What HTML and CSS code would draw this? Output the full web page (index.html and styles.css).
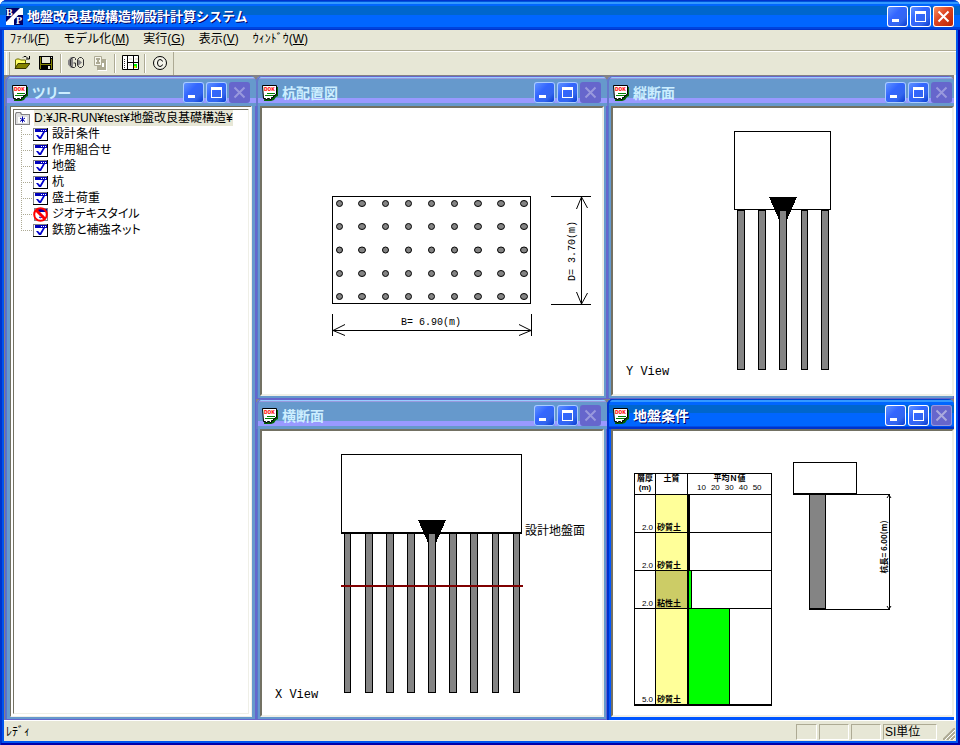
FILE: index.html
```html
<!DOCTYPE html>
<html lang="ja">
<head>
<meta charset="utf-8">
<title>地盤改良基礎構造物設計計算システム</title>
<link rel="stylesheet" href="styles.css">
</head>
<body>
<svg class="defs" aria-hidden="true">
  <defs>
    <symbol id="doc" viewBox="0 0 16 16">
      <path d="M3 2h13v9l-2 1-2 3-3 1H2z" fill="#006600"/>
      <path d="M.5.5h14v9h-1v1h-2v2h-2v2h-2v-1h-2v1h-2v-1h-2z" fill="#fff" stroke="#000"/>
      <text x="2" y="6" class="doc-text">DOK</text>
      <path d="M5 8.500h8M3 10.500h8" stroke="#008000"/>
    </symbol>
    <symbol id="min" viewBox="0 0 21 21"><path d="M5 13h7v3H5z" fill="#fff"/></symbol>
    <symbol id="max" viewBox="0 0 21 21"><path d="M5 5h11v11H5zM6 8v7h9V8z" fill="#fff" fill-rule="evenodd"/></symbol>
    <symbol id="close" viewBox="0 0 21 21"><path d="M5.500 5.500l10 10M15.500 5.500l-10 10" fill="none" stroke="currentColor" stroke-width="2"/></symbol>
    <symbol id="item" viewBox="0 0 15 13">
      <path d="M0 0h15v13H0z" fill="#000"/><path d="M0 0h14v12H0z" fill="#848284"/><path d="M1 1h13v11H1z" fill="#fff"/>
      <path d="M2 1h12v3H2z" fill="#0000bb"/><path d="M8 2h1v1H8zM10 2h1v1h-1zM12 2h1v1h-1z" fill="#fff"/>
      <path d="M3 7h2l2 2 3-5h2L8 11H6z" fill="#0000cc"/>
    </symbol>
    <symbol id="ban" viewBox="0 0 15 15">
      <path d="M1 1h14v13H1z" fill="#848284"/><path d="M2 2h12v11H2z" fill="#fff"/><path d="M3 2h11v3H3z" fill="#0000aa"/>
      <path d="M6 10l2 1 2-3" fill="none" stroke="#0000cc"/>
      <circle cx="7.500" cy="7.500" r="6.300" fill="none" stroke="#f00" stroke-width="2"/><path d="M3 3l9 9" stroke="#f00" stroke-width="3"/>
    </symbol>
  </defs>
</svg>

<div class="window">
  <header class="titlebar">
    <svg class="app-icon" viewBox="0 0 17 17" aria-hidden="true">
      <path d="M0 0h17v17H0z" fill="#000066"/><path d="M0 17v-3L14 0h3v2L3 17z" fill="#fff"/><path d="M8 8l8-8h1v7h-7z" fill="#fff"/>
      <path d="M0 17l8-8v8z" fill="#fff"/>
      <text x="0" y="8" class="app-letter">B</text><text x="10" y="16" class="app-letter">P</text>
    </svg>
    <h1>地盤改良基礎構造物設計計算システム</h1>
    <div class="controls">
      <button class="ctl" aria-label="最小化"><svg><use href="#min"/></svg></button>
      <button class="ctl" aria-label="最大化"><svg><use href="#max"/></svg></button>
      <button class="ctl ctl-red" aria-label="閉じる"><svg><use href="#close"/></svg></button>
    </div>
  </header>

  <nav class="menubar">
    <button>ﾌｧｲﾙ(<u>F</u>)</button>
    <button>モデル化(<u>M</u>)</button>
    <button>実行(<u>G</u>)</button>
    <button>表示(<u>V</u>)</button>
    <button>ｳｨﾝﾄﾞｳ(<u>W</u>)</button>
  </nav>

  <div class="toolbar">
    <button aria-label="開く"><svg class="tool" viewBox="0 0 16 16">
      <path d="M1.500 13V5l1-1h3l1 1h5v4" fill="#ffff66" stroke="#666600"/><path d="M1 13.500l3-5h12l-4 5z" fill="#848200" stroke="#333300"/>
      <path d="M9 2.500l1-1h2l2 2M15.500 1v3H12" fill="none" stroke="#000"/></svg></button>
    <button aria-label="保存"><svg class="tool" viewBox="0 0 16 16">
      <path d="M1 1h14v14H2l-1-1z" fill="#000"/><path d="M2 2h1v12H2zM13 4h1v10h-1zM3 9h10v1H3z" fill="#848200"/>
      <path d="M4 2h8v6H4zM13 2h1v1h-1z" fill="#e7e7d6"/><path d="M10 11h2v3h-2z" fill="#e7e7d6"/></svg></button>
    <span class="sep"></span>
    <button aria-label="計算実行"><svg class="tool-wide" viewBox="0 0 17 15">
      <path d="M3 2h2v11H3L0 9.500v-4zM10 4l4 3.500-4 3.500z" fill="#848284"/>
      <path d="M7.500 5V3.500l-1-1h-2l-2 2v6l2 2h2l1-1V8H5.500M9.500 4.500l2-2h2l2 2v6l-2 2h-2l-2-2z" fill="none" stroke="#333"/></svg></button>
    <button aria-label="コピー" disabled><svg class="tool" viewBox="0 0 16 16">
      <path d="M6 5h9v11H6z" fill="#fff"/><path d="M5 4h9v11H5z" fill="#adaa94"/><path d="M2.500 1.500h7v9h-7z" fill="#f7f7ee" stroke="#adaa94"/>
      <path d="M4 3h4v2H7v2h1v2H4V7h1V5H4z" fill="#adaa94"/><path d="M10 8h2v4h-2z" fill="#fff"/></svg></button>
    <span class="sep"></span>
    <button aria-label="一覧"><svg class="tool-wide" viewBox="0 0 17 15">
      <path d="M.5.5h16v14H.5z" fill="#fff" stroke="#000"/><path d="M5.500 0v15M11.500 0v15M5 7.500h12" stroke="#000"/>
      <path d="M2 4.500h2M2 6.500h2M2 8.500h2M2 10.500h2M2 12.500h2" stroke="#333" stroke-dasharray="1"/><path d="M7 4h3M13 4h3M7 10h3" stroke="#d6d3bd"/><path d="M12 9h3v4h-3z" fill="#0f0"/><path d="M12 11h2v2h-2z" fill="#fc0"/></svg></button>
    <span class="sep"></span>
    <button aria-label="バージョン情報"><svg class="tool" viewBox="0 0 16 16">
      <circle cx="8" cy="8" r="6.500" fill="#f4f4ea" stroke="#000"/><path d="M10.500 6.500Q10 4.500 8 4.500Q5.500 4.500 5.500 8T8 11.500Q10 11.500 10.500 9.500" fill="none" stroke="#000"/></svg></button>
    <span class="tool-end"></span>
  </div>

  <main class="mdi">
    <section class="child child-tree">
      <header class="child-title"><svg class="doc"><use href="#doc"/></svg><h2>ツリー</h2>
        <div class="controls">
          <button class="ctl" aria-label="最小化"><svg><use href="#min"/></svg></button>
          <button class="ctl" aria-label="最大化"><svg><use href="#max"/></svg></button>
          <button class="ctl ctl-off" aria-label="閉じる" disabled><svg><use href="#close"/></svg></button>
        </div></header>
      <div class="client client-tree">
        <div class="tree-root">
          <svg class="root-icon" viewBox="0 0 15 13" aria-hidden="true"><path d="M0 2l1-2h5l1 2h8v11H0z" fill="#848284"/><path d="M1 2l1-1h3l1 2h8v9H1z" fill="#dedede"/><path d="M3 5h9v6H3z" fill="#fff"/><path d="M7.500 4.500v6M5 6l5 3.500M10 6L5 9.500" stroke="#0000aa"/></svg>
          <span class="root-label">D:¥JR-RUN¥test¥地盤改良基礎構造¥</span>
        </div>
        <ul class="tree">
          <li><svg class="item"><use href="#item"/></svg>設計条件</li>
          <li><svg class="item"><use href="#item"/></svg>作用組合せ</li>
          <li><svg class="item"><use href="#item"/></svg>地盤</li>
          <li><svg class="item"><use href="#item"/></svg>杭</li>
          <li><svg class="item"><use href="#item"/></svg>盛土荷重</li>
          <li><svg class="item item-ban"><use href="#ban"/></svg>ジオテキスタイル</li>
          <li><svg class="item"><use href="#item"/></svg>鉄筋と補強ネット</li>
        </ul>
      </div>
    </section>

    <section class="child">
      <header class="child-title"><svg class="doc"><use href="#doc"/></svg><h2>杭配置図</h2>
        <div class="controls">
          <button class="ctl" aria-label="最小化"><svg><use href="#min"/></svg></button>
          <button class="ctl" aria-label="最大化"><svg><use href="#max"/></svg></button>
          <button class="ctl ctl-off" aria-label="閉じる" disabled><svg><use href="#close"/></svg></button>
        </div></header>
      <div class="client">
        <svg class="drawing">
          <defs>
            <g id="pile-row" fill="#848484" stroke="#000" shape-rendering="auto">
              <circle cx="77.500" r="3"/><ellipse cx="100" rx="3.500" ry="3"/><circle cx="123.500" r="3"/>
              <circle cx="146.500" r="3"/><circle cx="169.500" r="3"/><circle cx="192.500" r="3"/>
              <ellipse cx="216" rx="3.500" ry="3"/><ellipse cx="239" rx="3.500" ry="3"/><ellipse cx="262" rx="3.500" ry="3"/>
            </g>
          </defs>
          <rect class="line" x="70.500" y="88.500" width="198" height="107"/>
          <use href="#pile-row" y="95.500"/><use href="#pile-row" y="118.500"/><use href="#pile-row" y="142"/><use href="#pile-row" y="165.500"/><use href="#pile-row" y="188.500"/>
          <path class="line" d="M70.500 206v22M269.500 206v22M70 222.500h200"/>
          <path class="line thin" d="M83 216.500l-12 6 12 5M257 216.500l12 6-12 5"/>
          <path class="line" d="M289 88.500h40M289 196.500h40M319.500 88v109"/>
          <path class="line thin" d="M314.500 101l5-12 6 11M314.500 184l5 12 6-11"/>
          <text class="dim" x="169" y="217" text-anchor="middle">B= 6.90(m)</text>
          <text class="dim" transform="translate(313 143) rotate(-90)" text-anchor="middle">D= 3.70(m)</text>
        </svg>
      </div>
    </section>

    <section class="child child-edge">
      <header class="child-title"><svg class="doc"><use href="#doc"/></svg><h2>縦断面</h2>
        <div class="controls">
          <button class="ctl" aria-label="最小化"><svg><use href="#min"/></svg></button>
          <button class="ctl" aria-label="最大化"><svg><use href="#max"/></svg></button>
          <button class="ctl ctl-off" aria-label="閉じる" disabled><svg><use href="#close"/></svg></button>
        </div></header>
      <div class="client">
        <svg class="drawing">
          <rect class="line" x="121.500" y="23.500" width="96" height="78"/>
          <path d="M156 89h28l-14 32z"/>
          <g class="pile">
            <rect x="124.500" y="102.500" width="7" height="159"/><rect x="145.500" y="102.500" width="7" height="159"/>
            <rect x="166.500" y="102.500" width="7" height="159"/><rect x="188.500" y="102.500" width="6" height="159"/>
            <rect x="208.500" y="102.500" width="7" height="159"/>
          </g>
          <text class="view-name" x="13" y="267">Y View</text>
        </svg>
      </div>
    </section>

    <section class="child">
      <header class="child-title"><svg class="doc"><use href="#doc"/></svg><h2>横断面</h2>
        <div class="controls">
          <button class="ctl" aria-label="最小化"><svg><use href="#min"/></svg></button>
          <button class="ctl" aria-label="最大化"><svg><use href="#max"/></svg></button>
          <button class="ctl ctl-off" aria-label="閉じる" disabled><svg><use href="#close"/></svg></button>
        </div></header>
      <div class="client">
        <svg class="drawing">
          <rect class="line" x="79.500" y="23.500" width="180" height="79"/>
          <path d="M79 101h181v2H79zM156 89h28l-14 32z"/>
          <g class="pile">
            <rect x="82.500" y="102.500" width="6" height="159"/><rect x="103.500" y="102.500" width="7" height="159"/>
            <rect x="124.500" y="102.500" width="7" height="159"/><rect x="145.500" y="102.500" width="7" height="159"/>
            <rect x="166.500" y="102.500" width="7" height="159"/><rect x="187.500" y="102.500" width="7" height="159"/>
            <rect x="208.500" y="102.500" width="7" height="159"/><rect x="230.500" y="102.500" width="6" height="159"/>
            <rect x="251.500" y="102.500" width="6" height="159"/>
          </g>
          <path d="M79 154h182v2H79z" fill="#800000"/>
          <text class="ground" x="263" y="104">設計地盤面</text>
          <text class="view-name" x="13" y="267">X View</text>
        </svg>
      </div>
    </section>

    <section class="child child-edge child-active">
      <header class="child-title"><svg class="doc"><use href="#doc"/></svg><h2>地盤条件</h2>
        <div class="controls">
          <button class="ctl" aria-label="最小化"><svg><use href="#min"/></svg></button>
          <button class="ctl" aria-label="最大化"><svg><use href="#max"/></svg></button>
          <button class="ctl ctl-off" aria-label="閉じる" disabled><svg><use href="#close"/></svg></button>
        </div></header>
      <div class="client client-soil">
        <table class="soil">
          <thead><tr><th class="c-depth">層厚<br>(m)</th><th class="c-kind">土質</th>
            <th class="c-n">平均Ｎ値<div class="scale"><span>10</span><span>20</span><span>30</span><span>40</span><span>50</span></div></th></tr></thead>
          <tbody>
            <tr class="layer"><td>2.0</td><td class="sand">砂質土</td><td class="n"><div class="bar" style="width:1%"></div></td></tr>
            <tr class="layer"><td>2.0</td><td class="sand">砂質土</td><td class="n"><div class="bar" style="width:1%"></div></td></tr>
            <tr class="layer"><td>2.0</td><td class="clay">粘性土</td><td class="n"><div class="bar" style="width:4%"></div></td></tr>
            <tr class="layer layer-deep"><td>5.0</td><td class="sand">砂質土</td><td class="n"><div class="bar" style="width:50%"></div></td></tr>
          </tbody>
        </table>
        <svg class="drawing">
          <rect class="line" x="13.500" y="31.500" width="63" height="31"/>
          <rect class="pile" x="29.500" y="63.500" width="16" height="115"/>
          <path class="line" d="M13 62.500h64M13 63.500h97M29 177.500h17M29 178.500h81M109.500 63v116"/>
          <path class="line thin" d="M107 67l2-3 2 3M107 175l2 3 2-3"/>
          <text class="length" transform="translate(107 116) rotate(-90)" text-anchor="middle">杭長= 6.00(m)</text>
        </svg>
      </div>
    </section>
  </main>

  <footer class="status">
    <span class="message">ﾚﾃﾞｨ</span>
    <span class="cell"></span><span class="cell cell-mid"></span><span class="cell cell-mid"></span><span class="cell cell-unit">SI単位</span>
    <svg class="grip" viewBox="0 0 12 12" aria-hidden="true"><path d="M0 12L12 0M4 12l8-8M8 12l4-4" stroke="#adaa94" stroke-width="2"/><path d="M2 12L12 2M6 12l6-6M10 12l2-2" stroke="#fff"/></svg>
  </footer>
</div>
</body>
</html>
```
FILE: styles.css
```css
* { box-sizing: border-box; }

body {
  margin: 0;
  background: #fff;
  color: #000;
  font: 12px/16px "Liberation Sans", "Noto Sans CJK JP", sans-serif;
}

button {
  margin: 0;
  padding: 0;
  border: 0;
  background: none;
  color: inherit;
  font: inherit;
}

h1, h2 {
  flex: 1;
  margin: 0;
  overflow: hidden;
  line-height: 20px;
  white-space: nowrap;
}

h1 { font-size: 13px; }
h2 { font-size: 14px; font-feature-settings: "palt"; }

.defs { position: absolute; width: 0; height: 0; }

/* main window */
.window {
  display: flex;
  flex-direction: column;
  height: 100vh;
  min-height: 560px;
  padding: 0 4px 4px;
  border-radius: 7px 7px 0 0;
  background: #0055ee;
  box-shadow: inset 1px 0 #0033cc, inset -2px -2px #0000aa, inset 2px 0 #0033cc;
  overflow: hidden;
}

.titlebar {
  display: flex;
  flex: none;
  align-items: center;
  gap: 4px;
  height: 30px;
  margin: 0 -4px;
  padding: 3px 6px 0;
  background: linear-gradient(#0033cc 0 1px, #0055dd 1px 2px, #3399ff 2px 4px, #0066ff 4px 6px, #0066cc 6px 15px, #0066ff 15px 27px, #0044dd 27px 29px, #0033cc 29px);
  color: #fff;
}

.titlebar h1 { text-shadow: 1px 1px #000066; }

.app-icon { width: 17px; height: 17px; }
.app-letter { fill: #fff; font: bold 10px "Liberation Serif", serif; }

.controls { display: flex; flex: none; gap: 2px; }

.ctl {
  width: 21px;
  height: 21px;
  border-radius: 3px;
  background: linear-gradient(135deg, #6699ff, #3366ff 40%, #3366ee 70%, #0033cc);
  box-shadow: inset 0 0 0 1px #fff;
  color: #fff;
}

.ctl svg { display: block; width: 21px; height: 21px; }
.ctl-red { background: linear-gradient(135deg, #ff9966, #dd4422 45%, #bb2200); }

.menubar {
  display: flex;
  flex: none;
  gap: 14px;
  height: 21px;
  padding: 1px 6px 3px;
  border-bottom: 1px solid #adaa94;
  background: #e7e7d6;
}

.toolbar {
  display: flex;
  flex: none;
  height: 24px;
  padding-left: 2px;
  border-top: 1px solid #fff;
  background: #e7e7d6;
}

.toolbar::before {
  width: 2px;
  border-right: 1px solid #adaa94;
  border-left: 1px solid #fff;
  content: "";
}

.toolbar button {
  display: flex;
  align-items: center;
  justify-content: center;
  width: 24px;
  padding-bottom: 2px;
}

.tool { width: 16px; height: 16px; }
.tool-wide { width: 17px; height: 15px; }

.sep {
  width: 2px;
  margin: 2px;
  border-right: 1px solid #fff;
  border-left: 1px solid #adaa94;
}

.tool-end { width: 2px; border-right: 1px solid #adaa94; }

/* child windows */
.mdi {
  display: grid;
  flex: 1;
  grid-template-rows: 323fr 321fr;
  grid-template-columns: 251fr 351fr 347fr;
  min-height: 0;
  padding: 1px 0 0 1px;
  border-right: 2px solid #fff;
  background: #848284;
}

.child {
  --frame: #6699cc;
  --edge: #6666cc;
  display: flex;
  flex-direction: column;
  min-width: 0;
  min-height: 0;
  padding: 0 3px 3px 4px;
  border-radius: 6px 6px 0 0;
  background: var(--frame);
  box-shadow: inset 1px 0 var(--edge), inset -1px -1px var(--edge), inset 2px 0 #5577cc;
}

.child-tree { grid-row: span 2; padding: 0 4px 3px 5px; }
.child-edge { padding-right: 0; }
.child-active { --frame: #0055ff; --edge: #0033cc; box-shadow: inset 2px 0 #0033cc; }

.child-title {
  display: flex;
  flex: none;
  align-items: center;
  gap: 4px;
  height: 30px;
  margin: 0 -3px 0 -4px;
  padding: 3px 6px 0;
  border-radius: 6px 6px 0 0;
  background: linear-gradient(#6666cc 0 1px, #99ccff 1px 2px, #9999dd 2px 3px, #6699cc 3px 22px, #9999ff 22px 27px, #6699cc 27px);
  box-shadow: inset 2px 0 #6677cc;
  color: #cceeff;
}

.child-tree .child-title { margin: 0 -4px 0 -5px; padding-left: 7px; }
.child-edge .child-title { margin-right: 0; padding-right: 2px; }

.child-active .child-title {
  background: linear-gradient(#0044cc 0 1px, #3399ff 1px 3px, #0066ff 3px 6px, #0066cc 6px 14px, #0066ff 14px 27px, #0033cc 28px);
  box-shadow: inset 2px 0 #0033cc;
  color: #fff;
  text-shadow: 1px 1px #000066;
}

.doc { width: 16px; height: 16px; }
.doc-text { fill: #f00; font: bold 6px "Liberation Mono", monospace; text-shadow: none; }

.child .ctl { box-shadow: inset 0 0 0 1px #aaccff; }
.child-active .ctl { box-shadow: inset 0 0 0 1px #fff; }
.child .ctl-off { background: #6666cc; box-shadow: none; color: #9999dd; }
.child-active .ctl-off { box-shadow: inset 0 0 0 1px #9999dd; color: #aaaadd; }

.client {
  flex: 1;
  min-height: 0;
  border: 2px solid;
  border-color: #737163 #efefe7 #efefe7 #737163;
  background: #fff;
  overflow: hidden;
}

.drawing { display: block; width: 100%; height: 100%; shape-rendering: crispEdges; }
.line { fill: none; stroke: #000; }
.thin { shape-rendering: auto; }
.pile { fill: #848484; stroke: #000; }
.dim { font: 10px "Liberation Mono", monospace; }
.view-name { font: 12px "Liberation Mono", monospace; }
.ground { font: 12px "Noto Sans CJK JP", sans-serif; }
.length { font: bold 8px "Noto Sans CJK JP", sans-serif; }

/* tree */
.client-tree { border: 4px double; border-color: #737163 #efefe7 #efefe7 #737163; }
.tree-root { display: flex; align-items: center; gap: 4px; height: 16px; padding-left: 1px; }
.root-icon { flex: none; width: 15px; height: 13px; }
.root-label { background: #e7e7d6; white-space: nowrap; font-feature-settings: "palt"; }

.tree {
  margin: 0 0 0 7px;
  padding: 0;
  list-style: none;
}

.tree li {
  display: flex;
  align-items: center;
  gap: 4px;
  height: 16px;
  white-space: nowrap;
  font-feature-settings: "palt";
}

.tree li::before {
  align-self: stretch;
  width: 12px;
  margin-right: -4px;
  background:
    linear-gradient(90deg, #adaa94 50%, transparent 50%) 0 8px / 2px 1px repeat-x,
    linear-gradient(#adaa94 50%, transparent 50%) 0 0 / 1px 2px repeat-y;
  content: "";
}

.tree li:last-child::before {
  height: 9px;
  align-self: flex-start;
}

.item { flex: none; width: 15px; height: 13px; }
.item-ban { height: 15px; }

/* soil layers */
.client-soil { display: flex; align-items: flex-start; gap: 8px; padding-left: 21px; }

.soil {
  flex: none;
  width: 138px;
  margin-top: 42px;
  border-bottom: 2px solid #000;
  border-collapse: collapse;
  table-layout: fixed;
  font: 8px/9px "Liberation Sans", "Noto Sans CJK JP", sans-serif;
}

.soil th, .soil td { padding: 0; border: 1px solid #000; }
.soil th { height: 21px; text-align: center; vertical-align: top; white-space: nowrap; }
.soil .c-depth { width: 21px; }
.soil .c-kind { width: 32px; }
.scale { display: flex; gap: 5px; padding-left: 9px; font-weight: normal; }
.layer { height: 38px; }
.layer-deep { height: 96px; }
.soil td { text-align: right; vertical-align: bottom; }
.soil td:first-child { padding-right: 2px; }
.soil .sand, .soil .clay { padding-left: 1px; border-right: 2px solid #000; background: #ffff99; font-weight: bold; text-align: left; }
.soil .clay { background: #cccc66; }
.bar { height: 37px; border-right: 1px solid #000; background: #00ff00; }
.layer-deep .bar { height: 95px; }

/* status bar */
.status {
  display: flex;
  flex: none;
  gap: 2px;
  height: 21px;
  padding: 3px 1px 1px 2px;
  border-top: 1px solid #fff;
  background: #e7e7d6;
}

.message { flex: 1; }
.cell { width: 21px; border: 1px solid; border-color: #adaa94 #fff #fff #adaa94; line-height: 14px; }
.cell-mid { width: 30px; }
.cell-unit { width: 54px; padding-left: 1px; }
.grip { align-self: flex-end; width: 12px; height: 12px; margin-left: 4px; }
```
